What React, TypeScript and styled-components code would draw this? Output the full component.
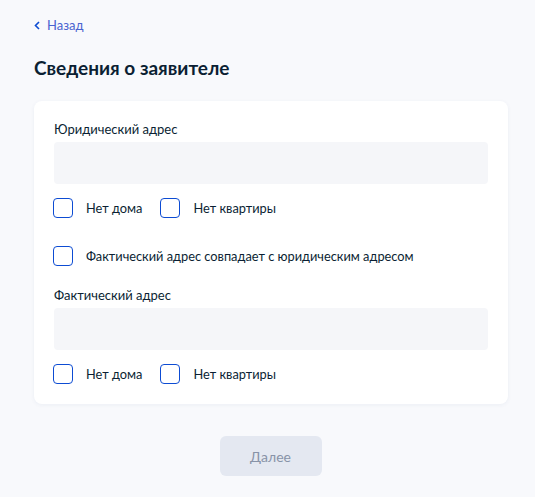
import React from "react";
import styled, { createGlobalStyle } from "styled-components";

const Global = createGlobalStyle`
  html, body { margin: 0; padding: 0; background: #f8f9fc; }
  body { font-family: Lato, "Noto Sans", sans-serif; color: #0b1f33; }
  * { box-sizing: border-box; }
`;

const Page = styled.div`
  width: 535px;
  min-height: 497px;
  padding: 16px 27px 20px 34px;
  display: flex;
  flex-direction: column;
`;

const Back = styled.a`
  display: flex;
  align-items: center;
  gap: 7px;
  color: #4a63d0;
  font-size: 13px;
  line-height: 18px;
  text-decoration: none;
  height: 18px;
`;

const Title = styled.h1`
  margin: 22px 0 0;
  font-size: 19px;
  line-height: 24px;
  font-weight: 700;
  color: #0b1f33;
`;

const Card = styled.div`
  margin-top: 21px;
  background: #fff;
  border-radius: 8px;
  box-shadow: 0 1px 4px rgba(40, 60, 120, 0.06);
  padding: 20px;
  display: flex;
  flex-direction: column;
`;

const Label = styled.div<{ $mt?: number }>`
  margin-top: ${(p) => p.$mt ?? 0}px;
  font-size: 13px;
  line-height: 16px;
  color: #0b1f33;
`;

const Input = styled.div`
  margin-top: 5px;
  height: 42px;
  background: #f5f6f9;
  border-radius: 4px;
`;

const Row = styled.div<{ $mt: number }>`
  display: flex;
  align-items: center;
  gap: 19px;
  margin-top: ${(p) => p.$mt}px;
`;

const Check = styled.label`
  display: flex;
  align-items: center;
  gap: 13px;
  font-size: 12.8px;
  line-height: 20px;
  color: #0b1f33;
`;

const Box = styled.span`
  width: 20px;
  height: 20px;
  border: 1.5px solid #0d4cd3;
  border-radius: 4px;
  flex-shrink: 0;
  margin-left: -1px;
`;

const Footer = styled.div`
  display: flex;
  justify-content: center;
  margin-top: 32px;
  padding-right: 1px;
`;

const Button = styled.button`
  width: 102px;
  height: 40px;
  border: none;
  border-radius: 6px;
  background: #e4e8f1;
  color: #8893a8;
  font-family: Lato, sans-serif;
  font-size: 14px;
`;

function CheckItem({ text }: { text: string }) {
  return (
    <Check>
      <Box />
      {text}
    </Check>
  );
}

export default function App() {
  return (
    <Page>
      <Global />
      <Back href="#">
        <svg width="6" height="9" viewBox="0 0 6 9">
          <path d="M5 1L1.5 4.5L5 8" fill="none" stroke="#0d4cd3" strokeWidth="1.6" />
        </svg>
        Назад
      </Back>
      <Title>Сведения о заявителе</Title>
      <Card>
        <Label>Юридический адрес</Label>
        <Input />
        <Row $mt={14}>
          <CheckItem text="Нет дома" />
          <CheckItem text="Нет квартиры" />
        </Row>
        <Row $mt={28}>
          <CheckItem text="Фактический адрес совпадает с юридическим адресом" />
        </Row>
        <Label $mt={21}>Фактический адрес</Label>
        <Input />
        <Row $mt={14}>
          <CheckItem text="Нет дома" />
          <CheckItem text="Нет квартиры" />
        </Row>
      </Card>
      <Footer>
        <Button>Далее</Button>
      </Footer>
    </Page>
  );
}
